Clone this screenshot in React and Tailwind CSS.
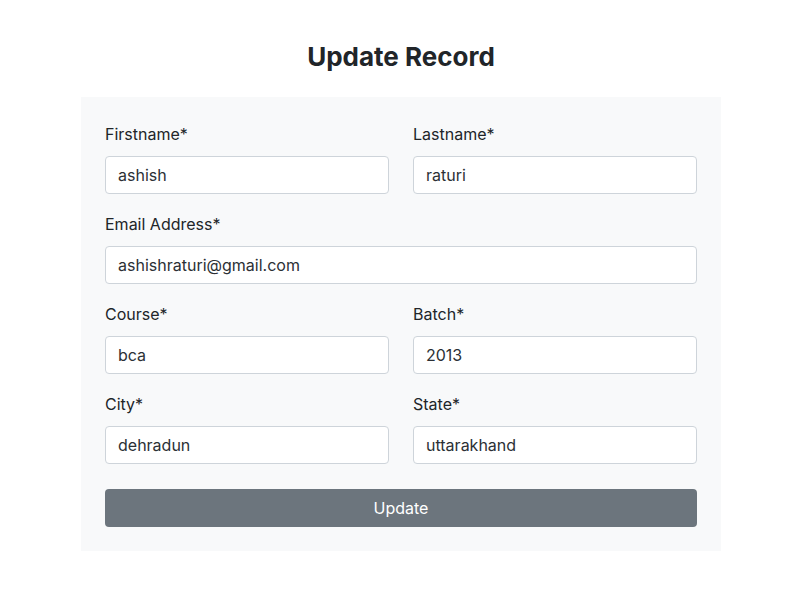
export default function App() {
  const Field = ({ label, value, full }) => (
    <div className={full ? 'col-span-2' : ''}>
      <label className="block text-[16px] leading-6 text-[#212529] mb-[10px]">{label}</label>
      <input
        defaultValue={value}
        className="block w-full h-[38px] px-3 text-[16px] text-[#2b3035] bg-white border border-[#ced4da] rounded-[4px] outline-none"
      />
    </div>
  );

  return (
    <div className="min-h-screen bg-white" style={{ fontFamily: 'Inter, "Noto Sans", sans-serif' }}>
      <div className="w-[640px] ml-[81px] pt-[40px]">
        <h3 className="text-center text-[26px] leading-[34px] font-bold text-[#212529] mb-[23px]">Update Record</h3>
        <form className="bg-[#f8f9fa] px-6 pt-[25px] pb-6">
          <div className="grid grid-cols-2 gap-x-6 gap-y-[18px]">
            <Field label="Firstname*" value="ashish" />
            <Field label="Lastname*" value="raturi" />
            <Field label="Email Address*" value="ashishraturi@gmail.com" full />
            <Field label="Course*" value="bca" />
            <Field label="Batch*" value="2013" />
            <Field label="City*" value="dehradun" />
            <Field label="State*" value="uttarakhand" />
          </div>
          <button
            type="button"
            className="mt-[25px] w-full h-[38px] bg-[#6c757d] text-white text-[16px] rounded-[4px]"
          >
            Update
          </button>
        </form>
      </div>
    </div>
  );
}
